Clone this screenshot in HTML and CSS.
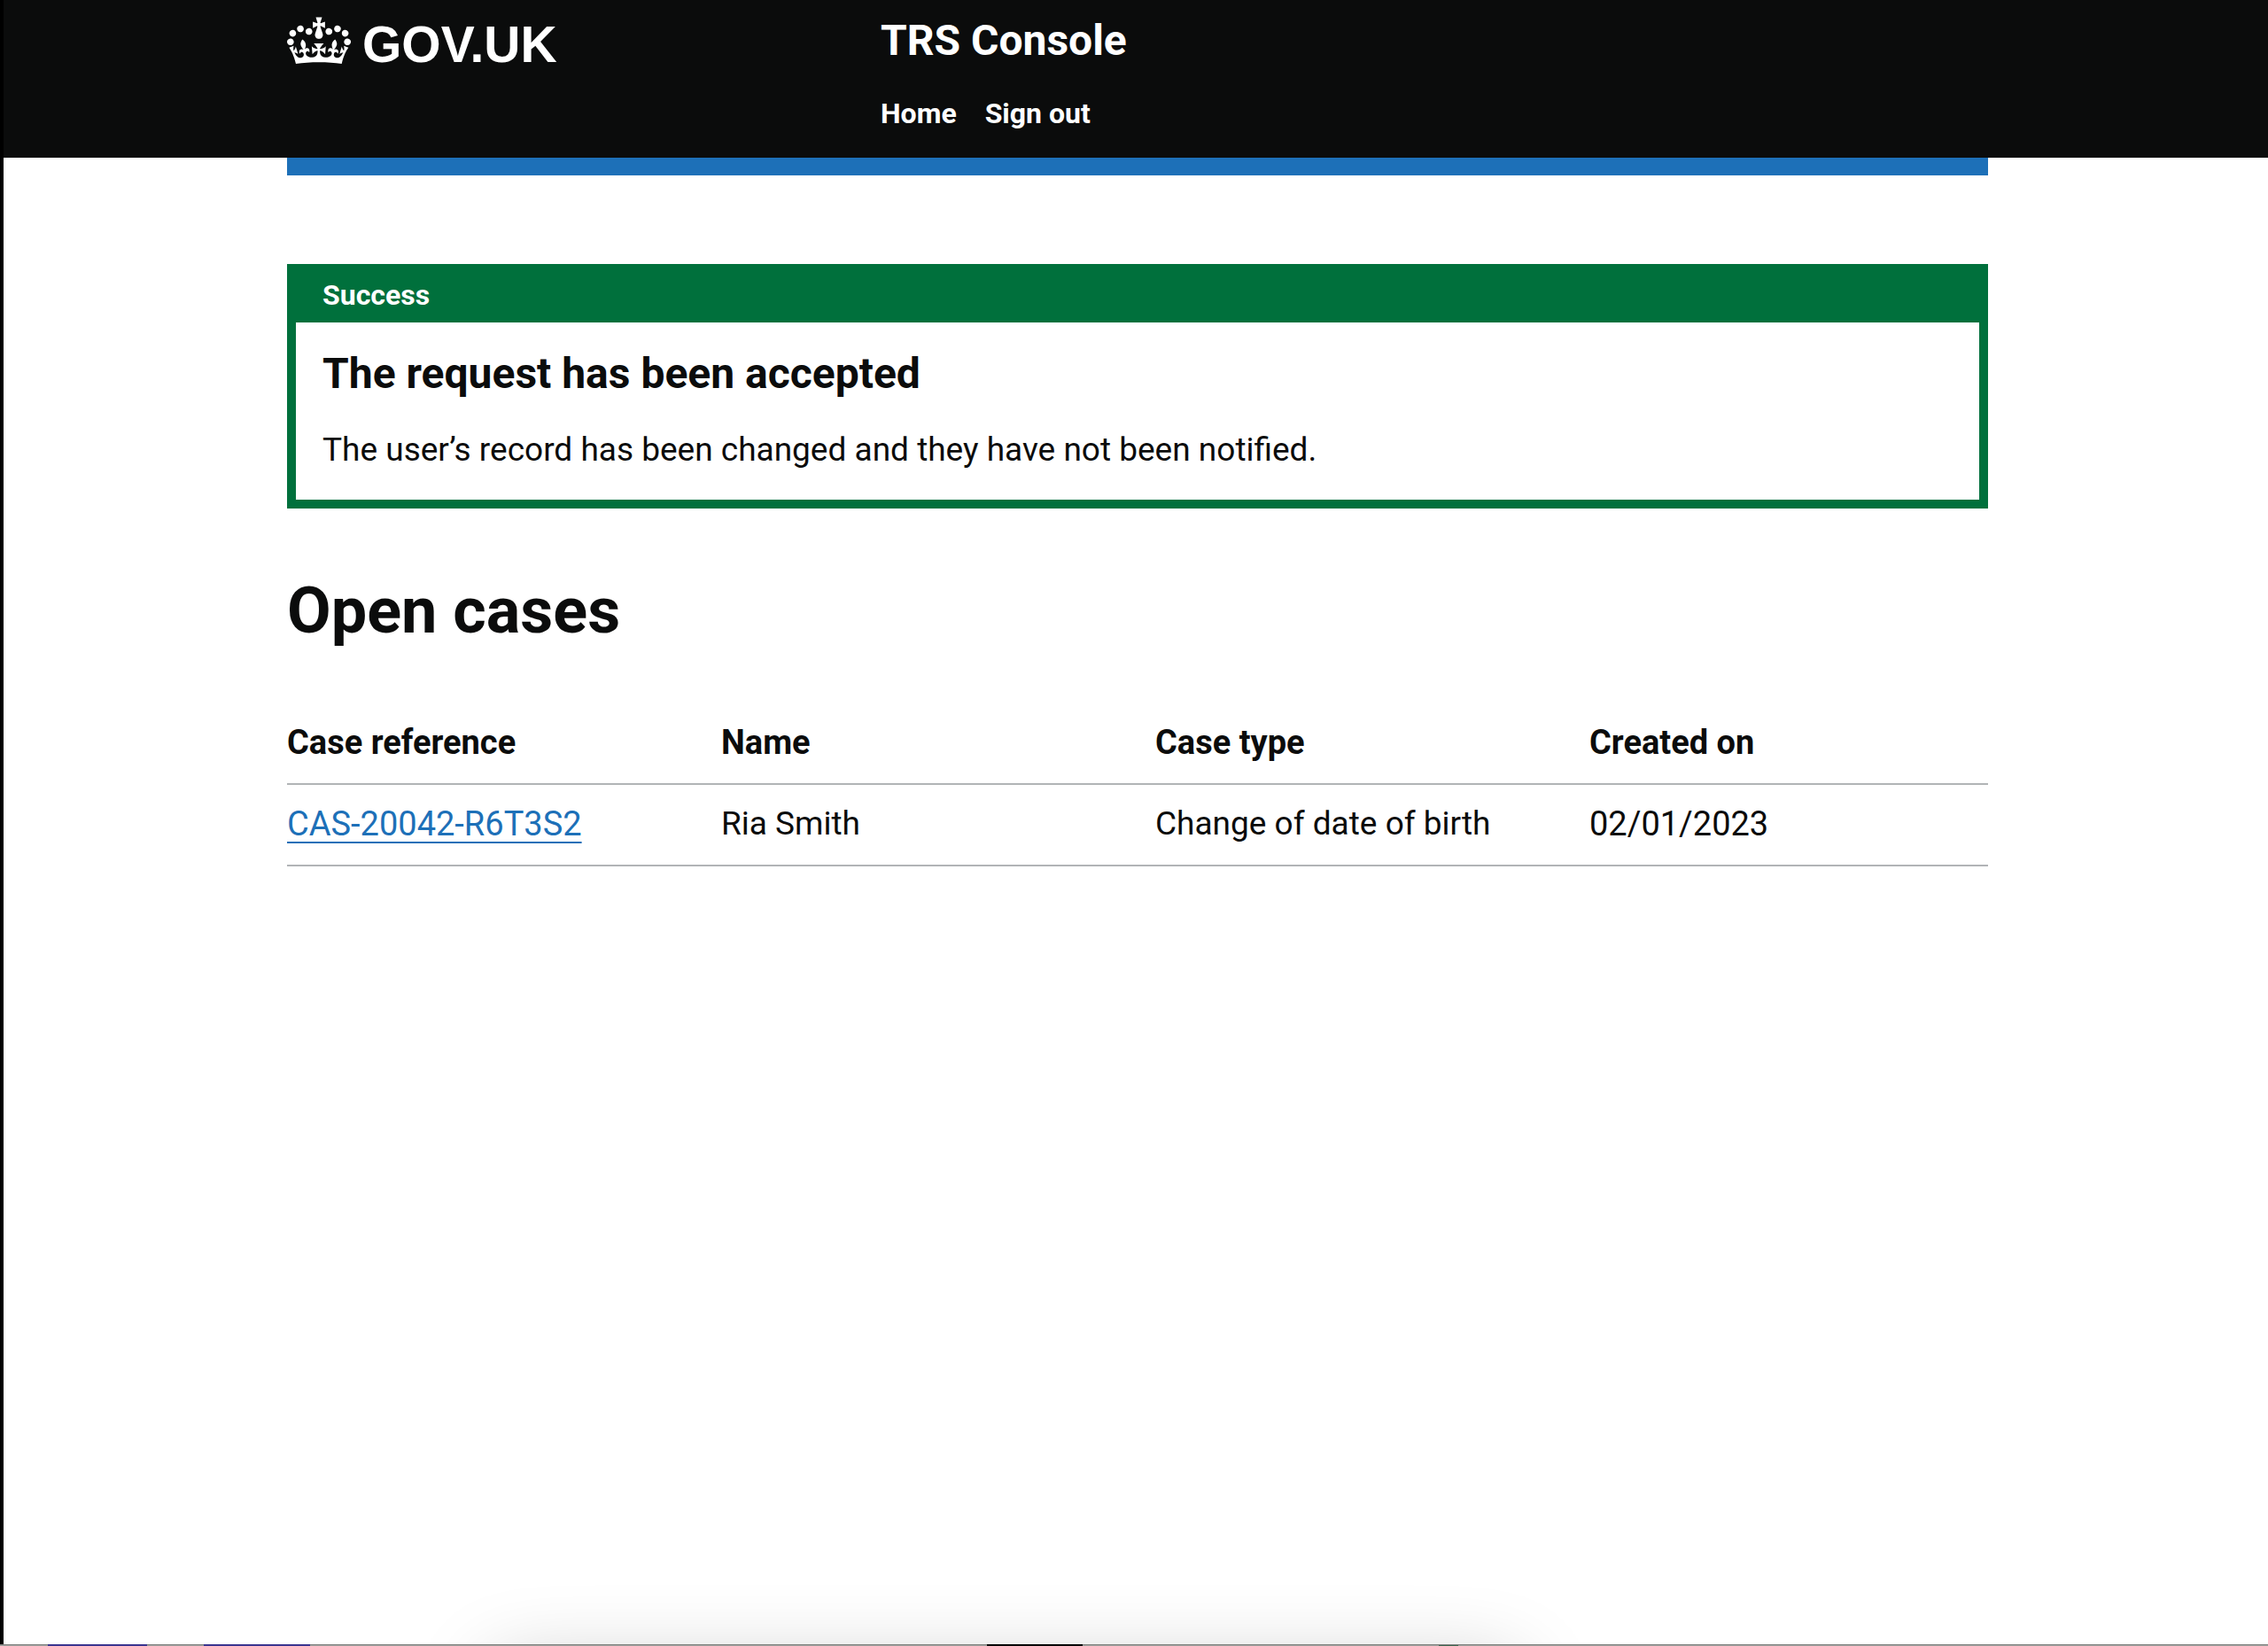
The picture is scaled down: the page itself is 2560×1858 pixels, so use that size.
FILE: index.html
```html
<!DOCTYPE html>
<html lang="en">
<head>
<meta charset="utf-8">
<title>Open cases - TRS Console</title>
<link rel="stylesheet" href="styles.css">
</head>
<body>
<header class="header">
  <div class="container header-inner">
    <a class="logo" href="#">
      <svg class="crown" viewBox="0 0 132 97" aria-hidden="true"><path fill="currentColor" fill-rule="evenodd" d="M25 30.2c3.5 1.5 7.7-.2 9.1-3.7 1.5-3.6-.2-7.8-3.9-9.2-3.6-1.4-7.6.3-9.1 3.9-1.4 3.5.3 7.5 3.9 9zM9 39.5c3.6 1.5 7.8-.2 9.2-3.7 1.5-3.6-.2-7.8-3.9-9.1-3.6-1.5-7.6.2-9.1 3.8-1.4 3.5.3 7.5 3.8 9zM4.4 57.2c3.5 1.5 7.7-.2 9.1-3.8 1.5-3.6-.2-7.7-3.9-9.1-3.5-1.5-7.6.3-9.1 3.8-1.4 3.5.3 7.6 3.9 9.1zm38.3-21.4c3.5 1.5 7.7-.2 9.1-3.8 1.5-3.6-.2-7.7-3.9-9.1-3.6-1.5-7.6.3-9.1 3.8-1.3 3.6.4 7.7 3.9 9.1zm64.4-5.6c-3.6 1.5-7.8-.2-9.1-3.7-1.5-3.6.2-7.8 3.8-9.2 3.6-1.4 7.7.3 9.2 3.9 1.3 3.5-.4 7.5-3.9 9zm15.9 9.3c-3.6 1.5-7.7-.2-9.1-3.7-1.5-3.6.2-7.8 3.7-9.1 3.6-1.5 7.7.2 9.2 3.8 1.5 3.5-.3 7.5-3.8 9zm4.7 17.7c-3.6 1.5-7.8-.2-9.2-3.8-1.5-3.6.2-7.7 3.9-9.1 3.6-1.5 7.7.3 9.2 3.8 1.3 3.5-.4 7.6-3.9 9.1zM89.3 35.8c-3.6 1.5-7.8-.2-9.2-3.8-1.4-3.6.2-7.7 3.9-9.1 3.6-1.5 7.7.3 9.2 3.8 1.4 3.6-.3 7.7-3.9 9.1zM69.7 17.7l8.9 4.7V9.3l-8.9 2.8c-.2-.3-.5-.6-.9-.9L72.4 0H59.6l3.5 11.2c-.3.3-.6.5-.9.9l-8.8-2.8v13.1l8.8-4.7c.3.3.6.7.9.9l-5 15.4v.1c-.2.8-.4 1.6-.4 2.4 0 4.1 3.1 7.5 7 8.1h.2c.3 0 .7.1 1 .1.4 0 .7 0 1-.1h.2c4-.6 7.1-4.1 7.1-8.1 0-.8-.1-1.7-.4-2.4V34l-5.1-15.4c.4-.2.7-.6 1-.9zM66 92.8c16.9 0 32.8 1.1 47.1 3.2 4-16.9 8.9-26.7 14-33.5l-9.6-3.4c1 4.9 1.1 7.2 0 10.2-1.5-1.4-3-4.3-4.2-8.7L108.6 76c2.8-2 5-3.2 7.5-3.3-4.4 9.4-10 11.9-13.6 11.2-4.3-.8-6.3-4.6-5.6-7.9 1-4.7 5.7-5.9 8-.5 4.3-8.7-3-11.4-7.6-8.8 7.1-7.2 7.9-13.5 2.1-21.1-8 6.1-8.1 12.3-4.5 20.8-4.7-5.4-12.1-2.5-9.5 6.2 3.4-5.2 7.9-2 7.2 3.1-.6 4.3-6.4 7.8-13.5 7.2-10.3-.9-10.9-8-11.2-13.8 2.5-.5 7.1 1.8 11 7.3L80.2 60c-4.1 4.4-8 5.3-12.3 5.4 1.4-4.4 8-11.6 8-11.6H55.5s6.4 7.2 7.9 11.6c-4.2-.1-8-1-12.3-5.4l1.4 16.4c3.9-5.5 8.5-7.7 10.9-7.3-.3 5.8-.9 12.8-11.1 13.8-7.2.6-12.9-2.9-13.5-7.2-.7-5 3.8-8.3 7.1-3.1 2.7-8.7-4.6-11.6-9.4-6.2 3.7-8.5 3.6-14.7-4.6-20.8-5.8 7.6-5 13.9 2.2 21.1-4.7-2.6-11.9.1-7.7 8.8 2.3-5.5 7.1-4.2 8.1.5.7 3.3-1.3 7.1-5.7 7.9-3.5.7-9-1.8-13.5-11.2 2.5.1 4.7 1.3 7.5 3.3l-4.7-15.4c-1.2 4.4-2.7 7.2-4.3 8.7-1.1-3-.9-5.3 0-10.2l-9.5 3.4c5 6.9 9.9 16.7 14 33.5 14.8-2.1 30.8-3.2 47.7-3.2z"/></svg>
      <span>GOV.UK</span>
    </a>
    <div class="service">
      <a class="service-name" href="#">TRS Console</a>
      <nav class="nav" aria-label="Menu">
        <a href="#">Home</a>
        <a href="#">Sign out</a>
      </nav>
    </div>
  </div>
</header>
<main class="main">
  <div class="container">
    <div class="bar"></div>
    <section class="banner" aria-labelledby="banner-title">
      <h2 class="banner-title" id="banner-title">Success</h2>
      <div class="banner-body">
        <h3 class="banner-heading">The request has been accepted</h3>
        <p class="banner-text">The user’s record has been changed and they have not been notified.</p>
      </div>
    </section>
    <h1 class="heading">Open cases</h1>
    <table class="table">
      <thead>
        <tr><th scope="col">Case reference</th><th scope="col">Name</th><th scope="col">Case type</th><th scope="col">Created on</th></tr>
      </thead>
      <tbody>
        <tr><td class="numeric"><a class="link" href="#">CAS-20042-R6T3S2</a></td><td>Ria Smith</td><td>Change of date of birth</td><td class="numeric">02/01/2023</td></tr>
      </tbody>
    </table>
  </div>
</main>
<div class="shade"><div class="shade-caster"></div></div>
<div class="edge"></div>
</body>
</html>
```
FILE: styles.css
```css
* { box-sizing: border-box; }
body {
  margin: 0;
  min-height: 100vh;
  display: flex;
  flex-direction: column;
  font-family: Roboto, "Liberation Sans", sans-serif;
  font-size: 37px;
  line-height: 50px;
  color: #0b0c0c;
  background: #fff;
}
h1, h2, h3, p { margin: 0; }
.container { max-width: 1920px; margin: 0 auto; }
.header, .main, .shade { border-left: 4px solid #000; }
.header, .main { padding-left: 4px; }
.header { background: #0b0c0c; color: #fff; }
.header a { color: inherit; text-decoration: none; }
.header-inner {
  display: grid;
  grid-template-columns: 670px 1fr;
  align-items: start;
  padding: 16px 0 30px;
}
.logo {
  display: flex;
  gap: 13px;
  padding-top: 3px;
  font: bold 57px/62px "Liberation Sans", Arial, sans-serif;
}
.crown { width: 72px; height: 54px; }
.service { display: flex; flex-direction: column; gap: 32px; }
.service-name { font-size: 48px; line-height: 60px; font-weight: 700; }
.nav { display: flex; gap: 32px; font-size: 32px; line-height: 40px; font-weight: 700; }
.main { flex: 1; }
.bar { height: 20px; background: #1d70b8; }
.banner { margin-top: 100px; border: 10px solid #00703c; }
.banner-title {
  padding: 5px 30px 11px 30px;
  background: #00703c;
  color: #fff;
  font-size: 32px;
  line-height: 40px;
}
.banner-body { padding: 28px 30px 31px; }
.banner-heading { font-size: 48px; line-height: 60px; }
.banner-text { margin-top: 31px; }
.heading { margin-top: 76px; font-size: 72px; line-height: 80px; }
.table {
  width: 100%;
  margin-top: 64px;
  border-collapse: separate;
  border-spacing: 0;
  table-layout: fixed;
  text-align: left;
}
.table th, .table td { padding: 19px 40px 21px 0; border-bottom: 2px solid #b1b4b6; font-weight: 400; }
.table th { font-weight: 700; }
.table th, .table .numeric { font-size: 38px; }
.table th:last-child, .table td:last-child { padding-right: 0; }
.table th:last-child { width: 450px; }
.link { color: #1d70b8; text-decoration-thickness: 2px; text-underline-offset: 7px; text-decoration-skip-ink: none; }
.shade { height: 80px; overflow: hidden; padding-top: 80px; }
.shade-caster {
  width: 1160px;
  height: 400px;
  margin: 24px auto 0 550px;
  border-radius: 20px;
  box-shadow: 0 0 90px rgba(0, 0, 0, .22);
}
.edge {
  height: 2px;
  background:
    linear-gradient(#3a3590, #3a3590) 54px 0 / 112px 2px no-repeat,
    linear-gradient(#3a3590, #3a3590) 230px 0 / 120px 2px no-repeat,
    linear-gradient(#000, #000) 1114px 0 / 108px 2px no-repeat,
    linear-gradient(#3f6650, #3f6650) 1624px 1px / 22px 1px no-repeat,
    linear-gradient(#80827f 50%, #a0a29f 50%);
}
```
